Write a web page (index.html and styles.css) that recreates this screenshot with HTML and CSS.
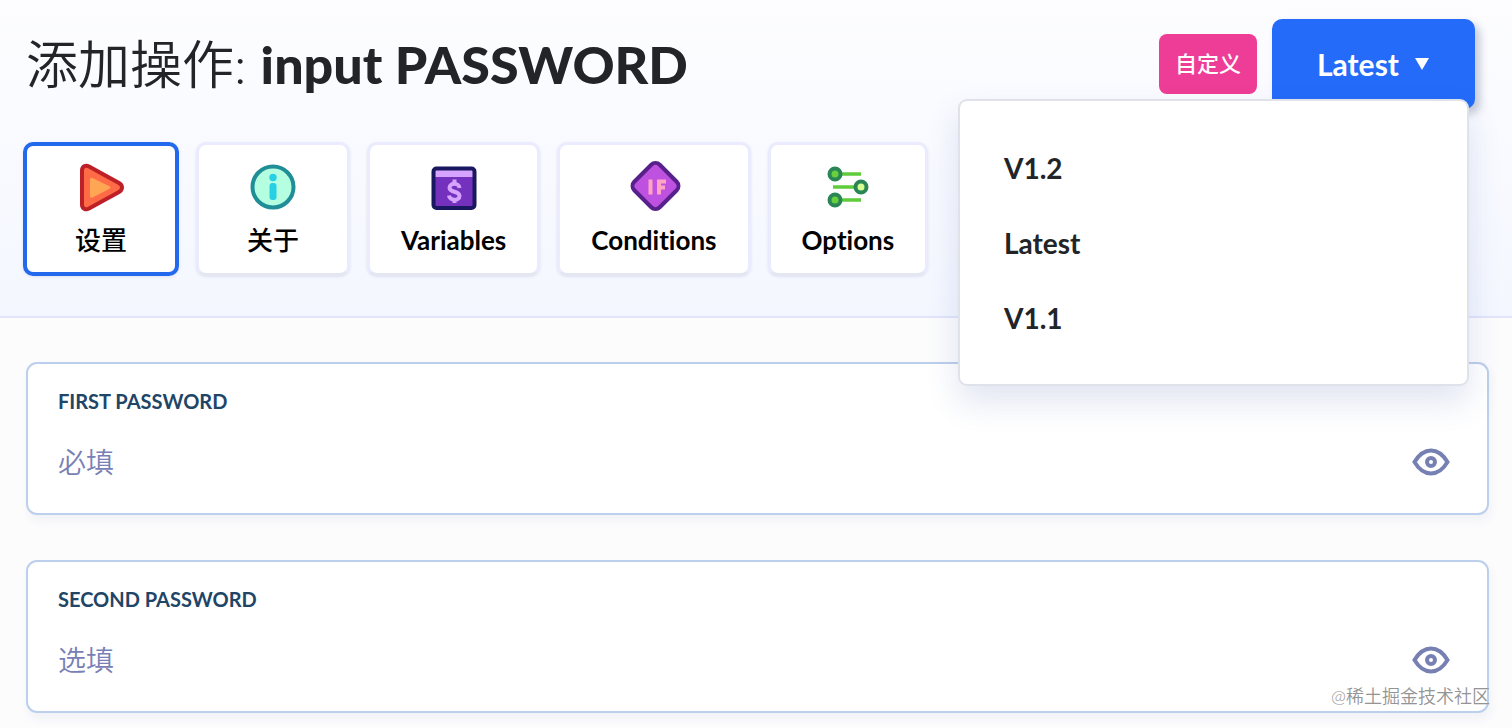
FILE: index.html
```
<!DOCTYPE html>
<html lang="zh-CN">
<head>
    <meta charset="UTF-8">
    <meta name="viewport" content="width=device-width, initial-scale=1.0">
    <title>添加操作: input PASSWORD</title>
    <link rel="stylesheet" href="styles.css">
</head>
<body>
    <header class="header">
        <div class="title-row">
            <h1>添加操作: <strong>input PASSWORD</strong></h1>
            <span class="tag">自定义</span>
            <div class="version">
                <button type="button" class="version-btn" aria-haspopup="true" aria-expanded="true">
                    Latest
                    <svg width="16" height="12" viewBox="0 0 16 12" aria-hidden="true"><path d="M1 0h14L8 12z" fill="#fff"/></svg>
                </button>
                <ul class="version-menu">
                    <li><button type="button">V1.2</button></li>
                    <li><button type="button">Latest</button></li>
                    <li><button type="button">V1.1</button></li>
                </ul>
            </div>
        </div>

        <nav class="tabs">
            <button type="button" class="tab active">
                <svg width="56" height="56" viewBox="0 0 56 56" aria-hidden="true">
                    <path d="M9 11.500C9 7.500 12.500 5.500 16 7.500L46 24C50 26.500 50 30.500 46 33L16 49.500C12.500 51.500 9 49.500 9 45.500Z" fill="#ff6b47" stroke="#bd2027" stroke-width="4"/>
                    <path d="M17 20.500Q17 18 19.500 19L36 27Q39 28.500 36 30L19.500 38.500Q17 39.500 17 37Z" fill="#ffa655"/>
                </svg>
                <span class="cn">设置</span>
            </button>
            <button type="button" class="tab">
                <svg width="56" height="56" viewBox="0 0 56 56" aria-hidden="true">
                    <circle cx="28" cy="28" r="20.500" fill="#b5ffe1" stroke="#208e96" stroke-width="4"/>
                    <circle cx="28" cy="18.500" r="3.700" fill="#27d0e4"/>
                    <rect x="24.500" y="24" width="7" height="17" rx="3" fill="#27d0e4"/>
                </svg>
                <span class="cn">关于</span>
            </button>
            <button type="button" class="tab">
                <svg width="56" height="56" viewBox="0 0 56 56" aria-hidden="true">
                    <rect x="7.500" y="9.500" width="41" height="39.500" rx="3" fill="#7431bd"/>
                    <path d="M9 11h38v7H9z" fill="#d6a3ff"/>
                    <rect x="7.500" y="9.500" width="41" height="39.500" rx="3" fill="none" stroke="#19175f" stroke-width="4"/>
                    <path d="M33.500 29C33 23.500 23.500 23.500 23.500 28.700C23.500 34 33.500 31.500 33.500 37C33.500 42 23.500 42 23 36.500M28.500 20.500v5M28.500 40v4" fill="none" stroke="#d6a3ff" stroke-width="4"/>
                </svg>
                <span>Variables</span>
            </button>
            <button type="button" class="tab">
                <svg width="56" height="56" viewBox="0 0 56 56" aria-hidden="true">
                    <rect x="11.500" y="9" width="36" height="36" rx="6" transform="rotate(45 29.500 27)" fill="#bf51e0" stroke="#57208a" stroke-width="4"/>
                    <path d="M24.500 20.500v15M33 35.500v-13h7M33 28.500h6" fill="none" stroke="#ffa4c4" stroke-width="4"/>
                </svg>
                <span>Conditions</span>
            </button>
            <button type="button" class="tab">
                <svg width="56" height="56" viewBox="0 0 56 56" aria-hidden="true">
                    <path d="M15 15h26M13 28h28M15 41h26" stroke="#5fcc3b" stroke-width="3.500"/>
                    <circle cx="15" cy="15" r="5.500" fill="#67d03c" stroke="#2a8654" stroke-width="4"/>
                    <circle cx="41" cy="28" r="5.500" fill="#d5ff91" stroke="#2a8654" stroke-width="4"/>
                    <circle cx="15" cy="41" r="5.500" fill="#67d03c" stroke="#2a8654" stroke-width="4"/>
                </svg>
                <span>Options</span>
            </button>
        </nav>
    </header>

    <form class="fields">
        <div class="field">
            <label for="firstPassword">FIRST PASSWORD</label>
            <div class="field-row">
                <input type="password" id="firstPassword" name="firstPassword" placeholder="必填">
                <button type="button" class="eye-btn" aria-label="显示密码">
                    <svg width="40" height="32" viewBox="0 0 40 32" aria-hidden="true">
                        <path d="M3.500 16C8 8.500 14 4.500 20 4.500S32 8.500 36.500 16C32 23.500 26 27.500 20 27.500S8 23.500 3.500 16Z"/>
                        <circle cx="20" cy="16" r="4"/>
                    </svg>
                </button>
            </div>
        </div>
        <div class="field">
            <label for="secondPassword">SECOND PASSWORD</label>
            <div class="field-row">
                <input type="password" id="secondPassword" name="secondPassword" placeholder="选填">
                <button type="button" class="eye-btn" aria-label="显示密码">
                    <svg width="40" height="32" viewBox="0 0 40 32" aria-hidden="true">
                        <path d="M3.500 16C8 8.500 14 4.500 20 4.500S32 8.500 36.500 16C32 23.500 26 27.500 20 27.500S8 23.500 3.500 16Z"/>
                        <circle cx="20" cy="16" r="4"/>
                    </svg>
                </button>
            </div>
            <span class="watermark">@稀土掘金技术社区</span>
        </div>
    </form>
</body>
</html>
```
FILE: styles.css
```
* {
    box-sizing: border-box;
}
body {
    margin: 0;
    font-family: Lato, "Noto Sans CJK SC", sans-serif;
    font-variant-ligatures: none;
    background-color: #fcfcfd;
    color: #222428;
}
button {
    font-family: inherit;
    font-variant-ligatures: inherit;
    border: none;
    cursor: pointer;
}
.header {
    padding: 19px 37px 40px 23px;
    background: linear-gradient(#fdfdff, #f4f7ff);
    border-bottom: 2px solid #e2e4fb;
}
.title-row {
    display: flex;
    align-items: center;
}
h1 {
    flex: 1;
    margin: 0;
    padding-left: 3px;
    font-size: 52px;
    font-weight: 350;
    line-height: 90px;
}
h1 strong {
    font-weight: 900;
}
.tag {
    padding: 0 16px;
    margin-right: 15px;
    border-radius: 8px;
    background-color: #ee3d96;
    color: white;
    font-size: 22px;
    font-weight: 500;
    line-height: 60px;
}
.version {
    position: relative;
}
.version-btn {
    display: flex;
    align-items: center;
    gap: 15px;
    height: 90px;
    padding: 0 45px;
    border-radius: 10px;
    background-color: #236bf8;
    box-shadow: 5px 5px 8px rgba(40, 50, 90, 0.25);
    color: white;
    font-size: 30px;
    font-weight: 700;
}
.version-menu {
    position: absolute;
    top: 80px;
    right: 6px;
    z-index: 1;
    width: 511px;
    margin: 0;
    padding: 30px 0 28px;
    border: 2px solid #e0e2ea;
    border-radius: 9px;
    background-color: white;
    box-shadow: 0 16px 32px rgba(50, 80, 160, 0.15);
    list-style: none;
}
.version-menu button {
    display: block;
    width: 100%;
    padding: 0 44px;
    background: none;
    color: #222428;
    font-size: 28px;
    font-weight: 700;
    line-height: 75px;
    text-align: left;
}
.tabs {
    display: flex;
    gap: 17px;
    margin-top: 33px;
}
.tab {
    display: flex;
    flex-direction: column;
    align-items: center;
    min-width: 154px;
    height: 134px;
    padding: 14px 31px 0;
    border: 3px solid #ebebff;
    border-bottom-color: #e4e6f2;
    border-radius: 10px;
    background-color: white;
    box-shadow: 0 1px 3px rgba(60, 70, 110, 0.12);
    color: black;
    font-size: 26px;
    font-weight: 700;
    line-height: 50px;
}
.tab.active {
    min-width: 156px;
    padding-top: 13px;
    border: 4px solid #2369ed;
}
.tab .cn {
    font-weight: 500;
}
.tab svg,
.eye-btn svg {
    display: block;
    flex: none;
}
.fields {
    display: flex;
    flex-direction: column;
    gap: 45px;
    padding: 44px 23px 15px 26px;
}
.field {
    position: relative;
    padding: 21px 36px 27px 30px;
    border: 2px solid #bccfec;
    border-radius: 11px;
    background-color: white;
    box-shadow: 2px 6px 10px rgba(60, 80, 130, 0.06);
}
.field label {
    display: block;
    color: #214567;
    font-size: 20px;
    font-weight: 700;
    line-height: 32px;
}
.field-row {
    display: flex;
    align-items: center;
    margin-top: 21px;
}
.field input {
    flex: 1;
    min-width: 0;
    height: 48px;
    padding: 0;
    border: none;
    outline: none;
    background: none;
    font-family: inherit;
    font-size: 28px;
    font-weight: 350;
}
.field input::placeholder {
    color: #7880b5;
    opacity: 1;
}
.eye-btn {
    padding: 0;
    background: none;
}
.eye-btn svg {
    fill: none;
    stroke: #7780b2;
    stroke-width: 4;
}
.watermark {
    position: absolute;
    right: -3px;
    bottom: 3px;
    color: #949494;
    font-size: 18px;
    font-weight: 350;
    line-height: 24px;
}
```
